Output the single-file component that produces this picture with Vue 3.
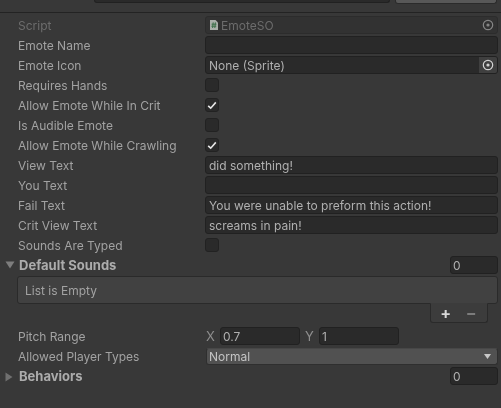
<script setup>
const topRows = [
  { label: "Emote Name", type: "text", value: "" },
  { label: "Emote Icon", type: "object", value: "None (Sprite)" },
  { label: "Requires Hands", type: "check", value: false },
  { label: "Allow Emote While In Crit", type: "check", value: true },
  { label: "Is Audible Emote", type: "check", value: false },
  { label: "Allow Emote While Crawling", type: "check", value: true },
  { label: "View Text", type: "text", value: "did something!" },
  { label: "You Text", type: "text", value: "" },
  { label: "Fail Text", type: "text", value: "You were unable to preform this action!" },
  { label: "Crit View Text", type: "text", value: "screams in pain!" },
  { label: "Sounds Are Typed", type: "check", value: false },
];
</script>

<template>
  <div class="inspector">
    <div class="topstrip">
      <div class="top-field"></div>
      <div class="top-btn"></div>
    </div>

    <div class="rows">
      <div class="row disabled">
        <span class="label">Script</span>
        <div class="field object">
          <svg class="file-icon" width="8" height="10" viewBox="0 0 8 10">
            <path d="M0 0H5.5L8 2.5V10H0Z" fill="#a9aea9" />
            <path d="M3.2 2.4L2.6 8M5.4 2.4L4.8 8M1.6 4.2H6.4M1.4 6.2H6.2" stroke="#3a6e48" stroke-width="1" fill="none" />
          </svg>
          <span class="value">EmoteSO</span>
          <span class="picker">
            <svg width="12" height="12" viewBox="0 0 12 12">
              <circle cx="6" cy="6" r="4.7" fill="none" stroke="#858585" stroke-width="1.2" />
              <circle cx="6" cy="6" r="1.6" fill="#858585" />
            </svg>
          </span>
        </div>
      </div>

      <div class="row" v-for="row in topRows" :key="row.label">
        <span class="label">{{ row.label }}</span>
        <div v-if="row.type === 'text'" class="field">
          <span class="value">{{ row.value }}</span>
        </div>
        <div v-else-if="row.type === 'object'" class="field object">
          <span class="value">{{ row.value }}</span>
          <span class="picker active">
            <svg width="12" height="12" viewBox="0 0 12 12">
              <circle cx="6" cy="6" r="4.7" fill="none" stroke="#d2d2d2" stroke-width="1.2" />
              <circle cx="6" cy="6" r="1.6" fill="#d2d2d2" />
            </svg>
          </span>
        </div>
        <div v-else class="check">
          <svg v-if="row.value" width="10" height="9" viewBox="0 0 10 9">
            <path d="M1.2 4.8L3.7 7.2L8.8 1.4" fill="none" stroke="#e6e6e6" stroke-width="1.6" />
          </svg>
        </div>
      </div>

      <div class="row foldout">
        <svg class="arrow" width="10" height="8" viewBox="0 0 10 8">
          <path d="M0.5 0.5H9.5L5 7.5Z" fill="#7d7d7d" />
        </svg>
        <span class="bold">Default Sounds</span>
        <div class="field count"><span class="value">0</span></div>
      </div>

      <div class="list-box">List is Empty</div>
      <div class="list-footer">
        <span class="plus">+</span>
        <span class="minus">−</span>
      </div>

      <div class="row">
        <span class="label">Pitch Range</span>
        <div class="range">
          <span class="axis">X</span>
          <div class="field small"><span class="value">0.7</span></div>
          <span class="axis">Y</span>
          <div class="field small"><span class="value">1</span></div>
        </div>
      </div>

      <div class="row">
        <span class="label">Allowed Player Types</span>
        <div class="dropdown">
          <span>Normal</span>
          <svg width="7" height="5" viewBox="0 0 7 5">
            <path d="M0 0H7L3.5 5Z" fill="#c8c8c8" />
          </svg>
        </div>
      </div>

      <div class="row foldout">
        <svg class="arrow" width="8" height="10" viewBox="0 0 8 10">
          <path d="M0.5 0.5L7.5 5L0.5 9.5Z" fill="#6f6f6f" />
        </svg>
        <span class="bold">Behaviors</span>
        <div class="field count"><span class="value">0</span></div>
      </div>
    </div>
  </div>
</template>

<style>
html,
body {
  background: #383838;
}
</style>

<style scoped>
* {
  box-sizing: border-box;
}
.inspector {
  width: 501px;
  height: 408px;
  overflow: hidden;
  background: #383838;
  color: #a2a2a2;
  font-family: Inter, "Liberation Sans", sans-serif;
  font-size: 12px;
  filter: blur(0.35px);
}
.topstrip {
  display: flex;
  gap: 5px;
  height: 13px;
  padding-left: 94px;
  border-bottom: 1px solid #232323;
}
.top-field {
  width: 296px;
  height: 3px;
  background: #2a2a2a;
  border: 1px solid #212121;
  border-top: 0;
  border-radius: 0 0 3px 3px;
}
.top-btn {
  width: 102px;
  height: 4px;
  background: #585858;
  border: 1px solid #2b2b2b;
  border-top: 0;
  border-radius: 0 0 3px 3px;
}
.rows {
  padding: 2px 3px 0 18px;
}
.row {
  display: flex;
  align-items: center;
  height: 20px;
}
.label {
  width: 187px;
  flex: none;
  white-space: nowrap;
}
.disabled .label,
.disabled .value {
  color: #6c6c6c;
}
.field {
  display: flex;
  align-items: center;
  flex: 1;
  height: 18px;
  padding-left: 3px;
  background: #2a2a2a;
  border: 1px solid #212121;
  border-radius: 3px;
  color: #b0b0b0;
  overflow: hidden;
}
.disabled .field {
  background: #323232;
  border-color: #2c2c2c;
}
.file-icon {
  margin: 0 3px 0 1px;
}
.value {
  flex: 1;
  white-space: nowrap;
}
.picker {
  display: flex;
  align-items: center;
  justify-content: center;
  width: 18px;
  height: 16px;
}
.picker.active {
  background: #3f3f3f;
}
.check {
  display: flex;
  align-items: center;
  justify-content: center;
  width: 14px;
  height: 14px;
  background: #2a2a2a;
  border: 1px solid #222222;
  border-radius: 3px;
}
.foldout {
  position: relative;
}
.arrow {
  position: absolute;
  left: -13px;
  top: 6px;
}
.bold {
  margin-left: 1px;
  padding-bottom: 1px;
  font-weight: 700;
  font-size: 13px;
  color: #acacac;
}
.count {
  flex: none;
  width: 48px;
  margin-left: auto;
  padding-left: 2px;
}
.list-box {
  display: flex;
  align-items: center;
  height: 28px;
  margin-top: 1px;
  margin-left: -1px;
  padding-left: 7px;
  background: #414141;
  border: 1px solid #2a2a2a;
  border-radius: 3px;
}
.list-footer {
  display: flex;
  align-items: center;
  justify-content: space-around;
  width: 58px;
  height: 20px;
  margin: -1px 10px 3px auto;
  padding: 0 3px 0 2px;
  background: #3c3c3c;
  border: 1px solid #2a2a2a;
  border-top-color: #3c3c3c;
  border-radius: 0 0 3px 3px;
  font-size: 16px;
  font-weight: 700;
}
.plus {
  color: #d8d8d8;
}
.minus {
  color: #7c7c7c;
}
.range {
  display: flex;
  align-items: center;
  flex: 1;
}
.axis {
  width: 15px;
  padding-left: 1px;
  font-size: 13px;
  color: #8e8e8e;
}
.field.small {
  flex: none;
  width: 80px;
  margin-right: 4px;
  padding-left: 2px;
}
.dropdown {
  display: flex;
  align-items: center;
  justify-content: space-between;
  flex: 1;
  height: 17px;
  margin: 1px 0 0 1px;
  padding: 0 6px 0 2px;
  background: #515151;
  border: 1px solid #2f2f2f;
  border-top-color: #474747;
  border-radius: 3px;
  color: #c4c4c4;
}
</style>
